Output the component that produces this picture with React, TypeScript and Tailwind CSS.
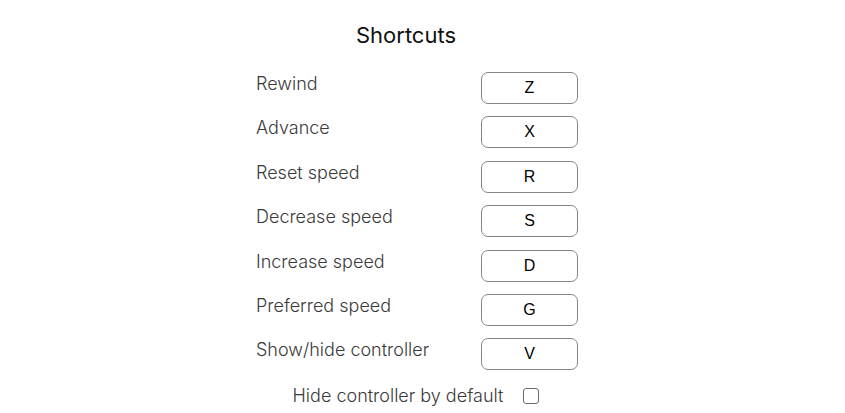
import React from "react";

const rows: [string, string][] = [
  ["Rewind", "Z"],
  ["Advance", "X"],
  ["Reset speed", "R"],
  ["Decrease speed", "S"],
  ["Increase speed", "D"],
  ["Preferred speed", "G"],
  ["Show/hide controller", "V"],
];

export default function App() {
  return (
    <div className="w-[845px] h-[413px] bg-white overflow-hidden" style={{ fontFamily: "Inter, 'Noto Sans', sans-serif" }}>
      <div className="mx-auto w-[333px] pt-[20px]">
        <div className="pr-[33px] text-center text-[22px] leading-[30px] text-[#111]">Shortcuts</div>
        <div className="mt-[22px] flex flex-col">
          {rows.map(([label, key]) => (
            <div key={label} className="flex items-start h-[44.4px]">
              <div className="w-[225px] text-[18px] font-light leading-[24px] text-[#3a3a3a]">{label}</div>
              <div className="w-[97px] h-[32px] mt-[0px] rounded-[7px] border border-[#858585] flex items-center justify-center text-[16px] text-black" style={{ fontFamily: "'Liberation Sans', Arial, sans-serif" }}>
                {key}
              </div>
            </div>
          ))}
        </div>
        <div className="mt-[1px] flex items-center justify-center gap-[20px] pr-[13px]">
          <span className="text-[18px] font-light leading-[24px] text-[#3a3a3a]">Hide controller by default</span>
          <span className="w-[16px] h-[16px] rounded-[3px] border border-[#6b6b6b] bg-white" />
        </div>
      </div>
    </div>
  );
}
